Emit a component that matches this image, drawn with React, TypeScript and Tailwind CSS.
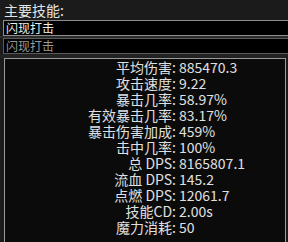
import React from "react";

const rows: [string, string][] = [
  ["平均伤害:", "885470.3"],
  ["攻击速度:", "9.22"],
  ["暴击几率:", "58.97%"],
  ["有效暴击几率:", "83.17%"],
  ["暴击伤害加成:", "459%"],
  ["击中几率:", "100%"],
  ["总 DPS:", "8165807.1"],
  ["流血 DPS:", "145.2"],
  ["点燃 DPS:", "12061.7"],
  ["技能CD:", "2.00s"],
  ["魔力消耗:", "50"],
];

const font = { fontFamily: '"Noto Sans CJK SC", "Noto Sans", sans-serif' };

export default function App() {
  return (
    <div
      className="w-[288px] h-[242px] overflow-hidden bg-[#1b1b1b] flex flex-col"
      style={font}
    >
      <div className="h-[20px] pl-[4px] text-[14px] leading-[20px] text-[#e4e4e4] shrink-0">
        主要技能:
      </div>
      <div className="ml-[3px] h-[16px] border border-r-0 border-[#8c8c8c] bg-black text-[12px] leading-[14px] pl-[2px] text-[#eeeeee] shrink-0 overflow-hidden">
        闪现打击
      </div>
      <div className="h-[2px] bg-[#2c2c2c] shrink-0" />
      <div className="ml-[3px] h-[16px] border border-r-0 border-[#5a5a5a] bg-black text-[12px] leading-[14px] pl-[2px] text-[#9a9a9a] shrink-0 overflow-hidden">
        闪现打击
      </div>
      <div className="h-[4px] bg-[#222222] shrink-0" />
      <div className="ml-[4px] w-[282px] flex-1 border border-b-0 border-[#9a9a9a] bg-[#0b0b0b] flex flex-col text-[14px] leading-[16px] text-[#e0e0e0]">
        {rows.map(([label, value]) => (
          <div key={label} className="flex h-[16px] whitespace-nowrap">
            <div className="w-[171px] text-right">{label}</div>
            <div className="pl-[3px]">{value}</div>
          </div>
        ))}
      </div>
    </div>
  );
}
